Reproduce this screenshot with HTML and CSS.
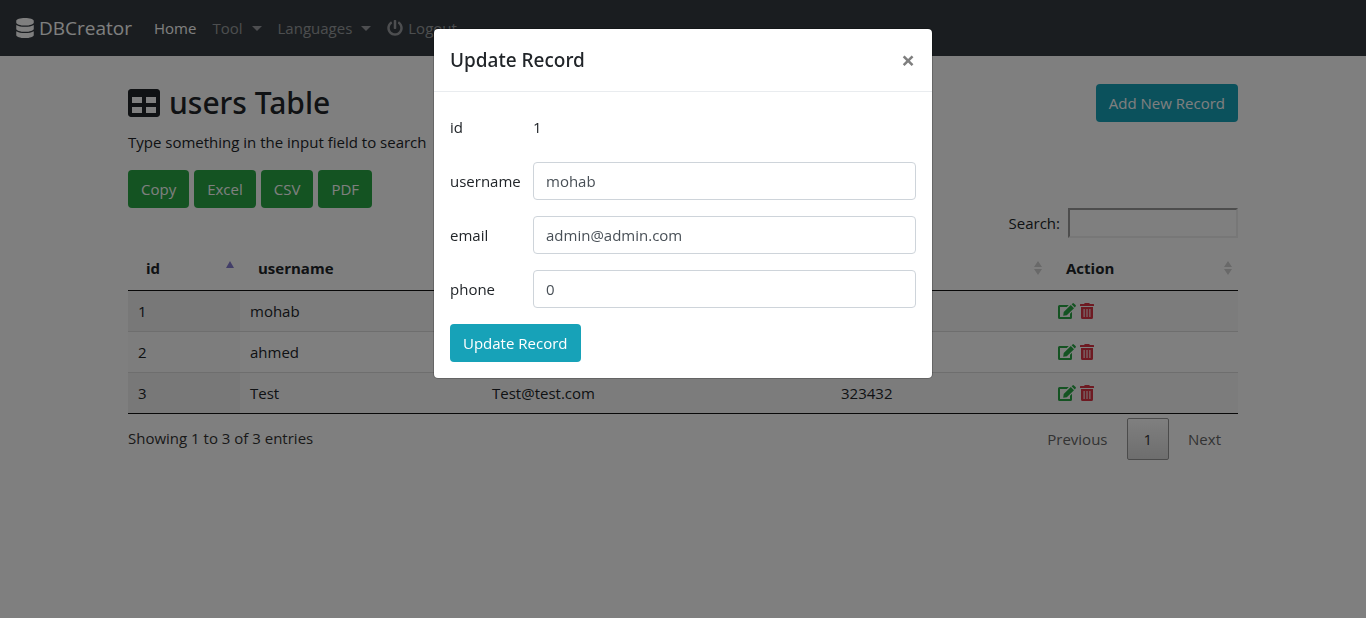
FILE: index.html
```html
<!DOCTYPE html>
<html lang="en">
  <head>
    <meta charset="utf-8">
    <title>DBCreator</title>
    <meta name="viewport" content="width=device-width, initial-scale=1">
    <link rel="stylesheet" href="styles.css">
  </head>
  <body>
  <svg class="sprite" aria-hidden="true">
      <symbol id="database" viewBox="0 0 448 512"><path d="M448 73.143v45.714C448 159.143 347.667 192 224 192S0 159.143 0 118.857V73.143C0 32.857 100.333 0 224 0s224 32.857 224 73.143zM448 176v102.857C448 319.143 347.667 352 224 352S0 319.143 0 278.857V176c48.125 33.143 136.208 48.572 224 48.572S399.874 209.143 448 176zm0 160v102.857C448 479.143 347.667 512 224 512S0 479.143 0 438.857V336c48.125 33.143 136.208 48.572 224 48.572S399.874 369.143 448 336z"/></symbol>
      <symbol id="power" viewBox="0 0 512 512"><path d="M400 54.1c63 45 104 118.6 104 201.9 0 136.8-110.8 247.7-247.5 248C120 504.3 8.2 393 8 256.4 7.9 173.1 48.9 99.3 111.8 54.2c11.7-8.3 28-4.8 35 7.7L162.6 90c5.9 10.5 3.1 23.8-6.6 31-41.5 30.8-68 79.6-68 134.9-.1 92.3 74.5 168.1 168 168.1 91.6 0 168.6-74.2 168-169.1-.3-51.8-24.7-101.8-68.1-134-9.7-7.2-12.4-20.5-6.5-30.9l15.8-28.1c7-12.4 23.2-16.1 34.8-7.8zM296 264V24c0-13.3-10.7-24-24-24h-32c-13.3 0-24 10.7-24 24v240c0 13.3 10.7 24 24 24h32c13.3 0 24-10.7 24-24z"/></symbol>
      <symbol id="grid" viewBox="0 0 512 512"><path d="M464 32H48C21.49 32 0 53.49 0 80v352c0 26.51 21.49 48 48 48h416c26.51 0 48-21.49 48-48V80c0-26.51-21.49-48-48-48zM224 416H64v-96h160v96zm0-160H64v-96h160v96zm224 160H288v-96h160v96zm0-160H288v-96h160v96z"/></symbol>
      <symbol id="edit" viewBox="0 0 18 16"><path d="M1.500 2H10.800L8.800 4H2V14H12V10.800L14 8.800V14.500Q14 16 12.500 16H1.500Q0 16 0 14.500V3.500Q0 2 1.500 2zM12.800 2 16 5.200 8.800 12.300 5.200 12.800 5.700 9.100zM13.600 1.200 14.500.4Q15.200-.2 15.900.4L17.600 2.100Q18.200 2.800 17.600 3.500L16.800 4.400z"/></symbol>
      <symbol id="trash" viewBox="0 0 14 16"><path fill-rule="evenodd" d="M.5 1H4L4.600.3Q4.900 0 5.300 0H8.700Q9.100 0 9.400.3L10 1H13.500Q14 1 14 1.500V3H0V1.500Q0 1 .5 1zM1 4H13V14.500Q13 16 11.500 16H2.500Q1 16 1 14.500zM3.600 6V14H4.600V6zM6.500 6V14H7.500V6zM9.400 6V14H10.400V6z"/></symbol>
      <symbol id="sort" viewBox="0 0 8 14"><path d="M4 0 8 6H0zM0 8H8L4 14z"/></symbol>
      <symbol id="sort-up" viewBox="0 0 8 14"><path d="M4 0 8 7H0z"/></symbol>
  </svg>

  <nav class="navbar">
      <a class="brand" href="#"><svg class="icon-database"><use href="#database"/></svg> DBCreator</a>
      <a class="nav-link active" href="#">Home</a>
      <a class="nav-link dropdown" href="#">Tool</a>
      <a class="nav-link dropdown" href="#">Languages</a>
      <a class="nav-link" href="#"><svg class="icon-power"><use href="#power"/></svg> Logout</a>
  </nav>

  <main class="container">
      <div class="page-header">
          <h2><svg class="icon-grid"><use href="#grid"/></svg> users Table</h2>
          <button class="btn btn-info" type="button">Add New Record</button>
      </div>
      <p class="hint">Type something in the input field to search</p>
      <div class="export">
          <button class="btn btn-success" type="button">Copy</button>
          <button class="btn btn-success" type="button">Excel</button>
          <button class="btn btn-success" type="button">CSV</button>
          <button class="btn btn-success" type="button">PDF</button>
      </div>
      <div class="filter">
          <label for="search">Search:</label>
          <input id="search" type="search">
      </div>
      <table class="records">
          <colgroup>
              <col class="col-id">
              <col class="col-username">
              <col class="col-email">
              <col class="col-phone">
              <col>
          </colgroup>
          <thead>
              <tr>
                  <th><div class="head">id <svg class="sort asc"><use href="#sort-up"/></svg></div></th>
                  <th><div class="head">username <svg class="sort"><use href="#sort"/></svg></div></th>
                  <th><div class="head">email <svg class="sort"><use href="#sort"/></svg></div></th>
                  <th><div class="head">phone <svg class="sort"><use href="#sort"/></svg></div></th>
                  <th><div class="head">Action <svg class="sort"><use href="#sort"/></svg></div></th>
              </tr>
          </thead>
          <tbody>
              <tr>
                  <td>1</td>
                  <td>mohab</td>
                  <td>admin@admin.com</td>
                  <td>0</td>
                  <td><div class="actions">
                      <a class="edit" href="#" aria-label="Edit"><svg><use href="#edit"/></svg></a>
                      <a class="delete" href="#" aria-label="Delete"><svg><use href="#trash"/></svg></a>
                  </div></td>
              </tr>
              <tr>
                  <td>2</td>
                  <td>ahmed</td>
                  <td></td>
                  <td></td>
                  <td><div class="actions">
                      <a class="edit" href="#" aria-label="Edit"><svg><use href="#edit"/></svg></a>
                      <a class="delete" href="#" aria-label="Delete"><svg><use href="#trash"/></svg></a>
                  </div></td>
              </tr>
              <tr>
                  <td>3</td>
                  <td>Test</td>
                  <td>Test@test.com</td>
                  <td>323432</td>
                  <td><div class="actions">
                      <a class="edit" href="#" aria-label="Edit"><svg><use href="#edit"/></svg></a>
                      <a class="delete" href="#" aria-label="Delete"><svg><use href="#trash"/></svg></a>
                  </div></td>
              </tr>
          </tbody>
      </table>
      <div class="table-footer">
          <div class="info">Showing 1 to 3 of 3 entries</div>
          <div class="paginate">
              <a href="#">Previous</a>
              <a class="current" href="#">1</a>
              <a href="#">Next</a>
          </div>
      </div>
  </main>

  <div class="backdrop">
      <div class="modal" role="dialog" aria-labelledby="modal-title">
          <div class="modal-header">
              <h5 id="modal-title">Update Record</h5>
              <button class="close" type="button" aria-label="Close">&times;</button>
          </div>
          <form class="modal-body">
              <div class="form-row">
                  <span class="label">id</span>
                  <span>1</span>
              </div>
              <div class="form-row">
                  <label for="username">username</label>
                  <input id="username" type="text" value="mohab">
              </div>
              <div class="form-row">
                  <label for="email">email</label>
                  <input id="email" type="text" value="admin@admin.com">
              </div>
              <div class="form-row">
                  <label for="phone">phone</label>
                  <input id="phone" type="text" value="0">
              </div>
              <button class="btn btn-info" type="button">Update Record</button>
          </form>
      </div>
  </div>
  </body>
</html>
```
FILE: styles.css
```css
* {
    box-sizing: border-box;
}

body {
    margin: 0;
    font-family: "Segoe UI", "Open Sans", "Noto Sans", sans-serif;
    font-size: 15px;
    line-height: 24px;
    color: #212529;
    background-color: #fff;
}

svg {
    fill: currentColor;
}

a {
    text-decoration: none;
}

.sprite {
    display: none;
}

.navbar {
    display: flex;
    align-items: center;
    height: 56px;
    padding: 0 16px;
    background-color: #343a40;
}

.brand {
    display: flex;
    align-items: center;
    gap: 5px;
    margin-right: 14px;
    font-size: 19px;
    color: #fff;
}

.nav-link {
    display: flex;
    align-items: center;
    gap: 5px;
    padding: 8px;
    color: rgba(255, 255, 255, .5);
}

.nav-link.active {
    color: #fff;
}

.dropdown::after {
    content: "";
    margin-left: 4px;
    border: 5px solid transparent;
    border-top-color: currentColor;
    border-bottom: 0;
}

.icon-database {
    width: 18px;
    height: 20px;
}

.icon-power {
    width: 16px;
    height: 16px;
}

.icon-grid {
    width: 32px;
    height: 32px;
}

.container {
    max-width: 1140px;
    margin: 0 auto;
    padding: 28px 15px 0;
}

.page-header {
    display: flex;
    justify-content: space-between;
    align-items: center;
}

h2 {
    display: flex;
    align-items: center;
    gap: 9px;
    margin: 0;
    font-size: 30px;
    font-weight: 500;
    line-height: 38px;
}

h2,
h5 {
    font-family: "Segoe UI", "Noto Sans", sans-serif;
}

.hint {
    margin: 8px 0 16px;
}

.btn {
    height: 38px;
    padding: 0 12px;
    border: 1px solid transparent;
    border-radius: 4px;
    font: inherit;
    color: #fff;
}

.btn-info {
    background-color: #17a2b8;
}

.btn-success {
    background-color: #28a745;
}

.export {
    display: flex;
    gap: 5px;
}

.filter {
    display: flex;
    justify-content: flex-end;
    align-items: center;
    gap: 8px;
}

.filter input {
    width: 170px;
    height: 30px;
    border: 2px inset #eee;
    background-color: #fff;
    font: inherit;
}

.records {
    width: 100%;
    margin-top: 8px;
    border-collapse: separate;
    border-spacing: 0;
    border-bottom: 1px solid #111;
    table-layout: fixed;
}

.col-id {
    width: 112px;
}

.col-username {
    width: 242px;
}

.col-email {
    width: 349px;
}

.col-phone {
    width: 217px;
}

.records th {
    padding: 10px 5px 10px 18px;
    border-bottom: 1px solid #111;
    font-weight: 700;
    text-align: left;
}

.head {
    display: flex;
    justify-content: space-between;
    align-items: center;
}

.sort {
    width: 10px;
    height: 14px;
    color: #d2d2d2;
}

.sort.asc {
    color: #857cd0;
}

.records td {
    height: 41px;
    padding: 8px 10px;
    border-top: 1px solid #ddd;
}

.records tbody tr:first-child td {
    height: 40px;
    border-top: 0;
}

.records tbody tr:nth-child(odd) {
    background-color: #f9f9f9;
}

.records tbody td:first-child {
    background-color: #fafafa;
}

.records tbody tr:nth-child(odd) td:first-child {
    background-color: #f1f1f1;
}

.actions {
    display: flex;
    align-items: center;
    gap: 4px;
}

.actions a {
    display: flex;
}

.edit {
    color: #28a745;
}

.edit svg {
    width: 18px;
    height: 16px;
}

.delete {
    color: #dc3545;
}

.delete svg {
    width: 14px;
    height: 16px;
}

.table-footer {
    display: flex;
    justify-content: space-between;
    padding-top: 4px;
    color: #333;
}

.info {
    padding-top: 8px;
}

.paginate {
    display: flex;
    gap: 2px;
}

.paginate a {
    padding: 8px 16px;
    border: 1px solid transparent;
    border-radius: 2px;
    color: #666;
}

.paginate .current {
    border-color: #979797;
    background: linear-gradient(#fff, #dcdcdc);
    color: #333;
}

.backdrop {
    position: fixed;
    inset: 0;
    padding: 28px 0;
    background-color: rgba(0, 0, 0, .5);
}

.modal {
    max-width: 500px;
    margin: 0 auto;
    border: 1px solid rgba(0, 0, 0, .2);
    border-radius: 5px;
    background-color: #fff;
    background-clip: padding-box;
}

.modal-header {
    display: flex;
    justify-content: space-between;
    align-items: center;
    padding: 16px;
    border-bottom: 1px solid #e9ecef;
}

.modal-header h5 {
    margin: 0;
    font-size: 19px;
    font-weight: 500;
    line-height: 30px;
}

.close {
    padding: 0 1px;
    border: 0;
    background: none;
    font: inherit;
    font-size: 24px;
    font-weight: 700;
    color: #7f7f7f;
}

.modal-body {
    padding: 16px;
}

.form-row {
    display: flex;
    align-items: center;
    min-height: 38px;
    margin-bottom: 16px;
}

.form-row label,
.form-row .label {
    flex: 0 0 83px;
}

.form-row input {
    flex: 1;
    min-width: 0;
    height: 38px;
    padding: 6px 12px;
    border: 1px solid #ced4da;
    border-radius: 4px;
    font: inherit;
    color: #495057;
}
```
